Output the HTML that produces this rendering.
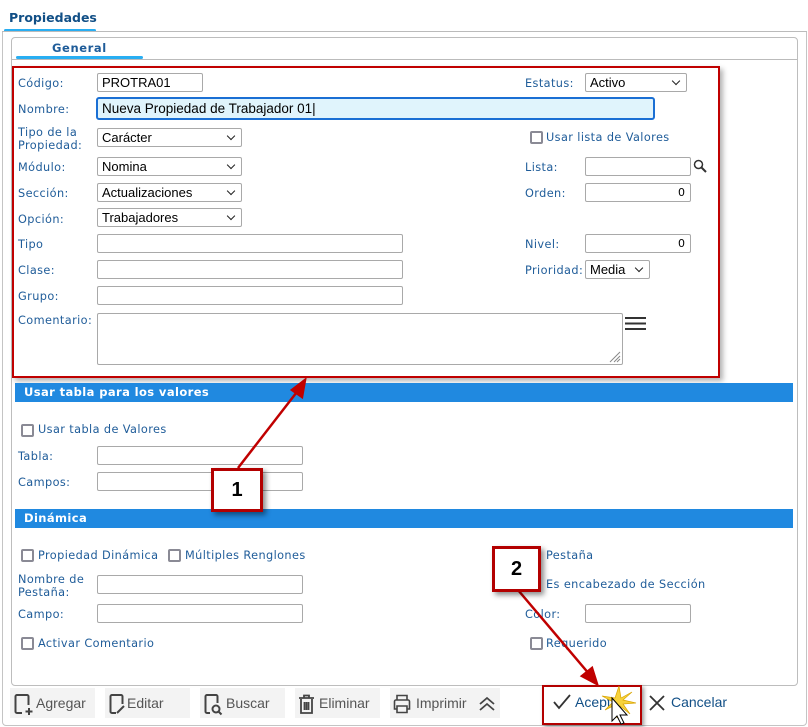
<!DOCTYPE html>
<html><head><meta charset="utf-8"><style>
*{box-sizing:border-box}
body{margin:0;width:808px;height:727px;background:#fff;position:relative;overflow:hidden;font-family:"DejaVu Sans","Liberation Sans",sans-serif;}
.a{position:absolute}
.l{position:absolute;font-size:11.3px;color:#1f5c99;letter-spacing:.4px;line-height:13px}
.i{position:absolute;border:1px solid #a9a9a9;border-radius:2px;background:#fff;height:19px;font-family:"Liberation Sans",sans-serif;font-size:13px;padding:1px 4px;color:#000;line-height:16px}
.s::after{content:"";position:absolute;right:7px;top:4px;width:5px;height:5px;border-right:1.5px solid #222;border-bottom:1.5px solid #222;transform:rotate(45deg)}
.r{text-align:right;font-size:11px;font-family:"DejaVu Sans",sans-serif;padding-right:5px}
.cb{position:absolute;width:13px;height:13px;border:2px solid #8a8a95;border-radius:2px;background:#fff}
.bar{position:absolute;left:15px;width:778px;height:19px;background:#2089e0;color:#fff;font-weight:bold;font-size:11.5px;padding:2px 9px;letter-spacing:.4px}
.btn{position:absolute;top:688px;height:30px;background:#f3f3f3;font-family:"Liberation Sans",sans-serif;font-size:14px;color:#555;line-height:30px}
.call{position:absolute;border:3px solid #b30000;background:#fff;box-shadow:3px 3px 5px rgba(0,0,0,.45);font:bold 20px "Liberation Sans",sans-serif;text-align:center}
</style></head><body>
<div class="a" style="left:2px;top:4px;width:805px;height:722px;border:1px solid #c4c4c4;border-radius:4px"></div>
<div class="a" style="left:0;top:4px;width:808px;height:27px;background:#fff"></div>
<div class="a" style="left:9px;top:10px;font:bold 12.5px 'DejaVu Sans',sans-serif;color:#114f86">Propiedades</div>
<div class="a" style="left:4px;top:29px;width:92px;height:3px;background:#29aef2;border-radius:2px"></div>
<div class="a" style="left:2px;top:31px;width:805px;height:1px;background:#bbb"></div>
<div class="a" style="left:11px;top:37px;width:787px;height:649px;border:1px solid #bdbdbd;border-radius:4px"></div>
<div class="a" style="left:52px;top:41px;font:bold 11.5px 'DejaVu Sans',sans-serif;color:#1f5c99;letter-spacing:.6px">General</div>
<div class="a" style="left:16px;top:56px;width:127px;height:3px;background:#29aef2;border-radius:2px"></div>
<div class="a" style="left:12px;top:59px;width:785px;height:1px;background:#bbb"></div>

<div class="a" style="left:12px;top:66px;width:708px;height:312px;border:2px solid #c00000;box-shadow:3px 3px 5px rgba(0,0,0,.3)"></div>

<div class="l" style="left:18px;top:77px">Código:</div><div class="i" style="left:97px;top:73px;width:106px">PROTRA01</div>
<div class="l" style="left:18px;top:103px">Nombre:</div><div class="i" style="left:96px;top:97px;width:559px;height:23px;border:2px solid #1a6fd4;background:#e0f4fc;border-radius:3px;padding-top:2px;font-size:13.5px">Nueva Propiedad de Trabajador 01|</div>
<div class="l" style="left:18px;top:126px">Tipo de la<br>Propiedad:</div><div class="i s" style="left:97px;top:128px;width:145px">Carácter</div>
<div class="l" style="left:18px;top:161px">Módulo:</div><div class="i s" style="left:97px;top:157px;width:145px">Nomina</div>
<div class="l" style="left:18px;top:187px">Sección:</div><div class="i s" style="left:97px;top:183px;width:145px">Actualizaciones</div>
<div class="l" style="left:18px;top:213px">Opción:</div><div class="i s" style="left:97px;top:208px;width:145px">Trabajadores</div>
<div class="l" style="left:18px;top:238px">Tipo</div><div class="i" style="left:97px;top:234px;width:306px"></div>
<div class="l" style="left:18px;top:264px">Clase:</div><div class="i" style="left:97px;top:260px;width:306px"></div>
<div class="l" style="left:18px;top:290px">Grupo:</div><div class="i" style="left:97px;top:286px;width:306px"></div>
<div class="l" style="left:18px;top:314px">Comentario:</div><div class="i" style="left:97px;top:313px;width:526px;height:52px"></div>
<svg class="a" style="left:606px;top:348px" width="16" height="16"><path d="M14 4L4 14M14 8L8 14M14 11L11 14" stroke="#888" stroke-width="1"/></svg>
<svg class="a" style="left:625px;top:316px" width="22" height="16"><path d="M0 2H21M0 7.5H21M0 13H21" stroke="#333" stroke-width="2"/></svg>

<div class="l" style="left:525px;top:77px">Estatus:</div><div class="i s" style="left:585px;top:73px;width:102px;height:19px">Activo</div>
<div class="cb" style="left:530px;top:131px"></div><div class="l" style="left:546px;top:131px">Usar lista de Valores</div>
<div class="l" style="left:525px;top:161px">Lista:</div><div class="i" style="left:585px;top:157px;width:106px"></div>
<svg class="a" style="left:693px;top:159px" width="14" height="14"><circle cx="5.5" cy="5.5" r="4" fill="none" stroke="#333" stroke-width="1.5"/><path d="M8.5 8.5L13 13" stroke="#333" stroke-width="2"/></svg>
<div class="l" style="left:525px;top:187px">Orden:</div><div class="i r" style="left:585px;top:183px;width:106px">0</div>
<div class="l" style="left:525px;top:238px">Nivel:</div><div class="i r" style="left:585px;top:234px;width:106px">0</div>
<div class="l" style="left:525px;top:264px">Prioridad:</div><div class="i s" style="left:585px;top:260px;width:65px;height:19px">Media</div>

<div class="bar" style="top:383px">Usar tabla para los valores</div>
<div class="cb" style="left:21px;top:424px"></div><div class="l" style="left:38px;top:423px">Usar tabla de Valores</div>
<div class="l" style="left:18px;top:450px">Tabla:</div><div class="i" style="left:97px;top:446px;width:206px"></div>
<div class="l" style="left:18px;top:476px">Campos:</div><div class="i" style="left:97px;top:472px;width:206px"></div>

<div class="bar" style="top:509px">Dinámica</div>
<div class="cb" style="left:21px;top:549px"></div><div class="l" style="left:38px;top:549px">Propiedad Dinámica</div>
<div class="cb" style="left:168px;top:549px"></div><div class="l" style="left:185px;top:549px">Múltiples Renglones</div>
<div class="l" style="left:546px;top:549px">Pestaña</div>
<div class="l" style="left:18px;top:573px">Nombre de<br>Pestaña:</div><div class="i" style="left:97px;top:575px;width:206px"></div>
<div class="l" style="left:546px;top:578px">Es encabezado de Sección</div>
<div class="l" style="left:18px;top:608px">Campo:</div><div class="i" style="left:97px;top:604px;width:206px"></div>
<div class="l" style="left:525px;top:608px">Color:</div><div class="i" style="left:585px;top:604px;width:106px"></div>
<div class="cb" style="left:21px;top:637px"></div><div class="l" style="left:38px;top:637px">Activar Comentario</div>
<div class="cb" style="left:530px;top:637px"></div><div class="l" style="left:546px;top:637px">Requerido</div>

<div class="btn" style="left:10px;width:85px"><svg class="a" style="left:3px;top:6px" width="22" height="22"><path d="M9 19H4a1.5 1.5 0 0 1-1.5-1.5V2.5A1.5 1.5 0 0 1 4 1h10a1.5 1.5 0 0 1 1.5 1.5V11M16 14v7M12.5 17.5h7" fill="none" stroke="#444" stroke-width="2"/></svg><span class="a" style="left:26px">Agregar</span></div>
<div class="btn" style="left:105px;width:85px"><svg class="a" style="left:3px;top:6px" width="20" height="22"><path d="M8 19H4a1.5 1.5 0 0 1-1.5-1.5V2.5A1.5 1.5 0 0 1 4 1h9a1.5 1.5 0 0 1 1.5 1.5V10M9 19l7-7" fill="none" stroke="#444" stroke-width="2"/></svg><span class="a" style="left:22px">Editar</span></div>
<div class="btn" style="left:200px;width:85px"><svg class="a" style="left:3px;top:6px" width="22" height="22"><path d="M7 19H4a1.5 1.5 0 0 1-1.5-1.5V2.5A1.5 1.5 0 0 1 4 1h9a1.5 1.5 0 0 1 1.5 1.5V9" fill="none" stroke="#444" stroke-width="2"/><circle cx="13" cy="15" r="3.5" fill="none" stroke="#444" stroke-width="2"/><path d="M15.5 17.5l3 3" stroke="#444" stroke-width="2"/></svg><span class="a" style="left:26px">Buscar</span></div>
<div class="btn" style="left:295px;width:85px"><svg class="a" style="left:3px;top:6px" width="18" height="22"><path d="M1 4H16M6 4V1.5h5V4M3 5v14h11V5M6.5 8v8M8.5 8v8M10.5 8v8" fill="none" stroke="#444" stroke-width="1.8"/></svg><span class="a" style="left:24px">Eliminar</span></div>
<div class="btn" style="left:390px;width:84px"><svg class="a" style="left:2px;top:6px" width="20" height="22"><path d="M5 6V1.5h10V6M5 15H2.5V7.5A1.5 1.5 0 0 1 4 6h12a1.5 1.5 0 0 1 1.5 1.5V15H15M5 12h10v6.5H5z" fill="none" stroke="#444" stroke-width="1.6"/></svg><span class="a" style="left:26px">Imprimir</span></div>
<div class="btn" style="left:474px;width:26px"><svg class="a" style="left:4px;top:8px" width="18" height="16"><path d="M2 8l7-6 7 6M2 14l7-6 7 6" fill="none" stroke="#444" stroke-width="1.8"/></svg></div>

<svg class="a" style="left:553px;top:694px" width="18" height="16"><path d="M1 8l5 6L17 1" fill="none" stroke="#333" stroke-width="1.8"/></svg>
<div class="a" style="left:575px;top:694px;font:14px 'Liberation Sans',sans-serif;color:#114f86">Aceptar</div>
<svg class="a" style="left:649px;top:695px" width="16" height="16"><path d="M1 1L15 15M15 1L1 15" stroke="#333" stroke-width="1.8"/></svg>
<div class="a" style="left:671px;top:694px;font:14px 'Liberation Sans',sans-serif;color:#114f86">Cancelar</div>
<div class="a" style="left:542px;top:685px;width:100px;height:40px;border:2px solid #b30000;box-shadow:2px 2px 4px rgba(0,0,0,.4)"></div>
<svg class="a" style="left:600px;top:684px" width="40" height="42"><path d="M19 2L21 14L32 8L23 16L36 19L23 20L30 30L20 22L17 34L15 21L5 26L13 18L2 12L15 14z" fill="#f7d23a" stroke="#d9a400" stroke-width=".7"/><path d="M12 14v23l5-5 4 8 3-1-4-8h7z" fill="#fff" stroke="#000" stroke-width="1"/></svg>

<svg class="a" style="left:0;top:0" width="808" height="727"><g stroke="#c00000" stroke-width="2.5" fill="#c00000"><line x1="238" y1="468" x2="300" y2="388"/><path d="M305 380L302 397L292 390z"/><line x1="518" y1="590" x2="590" y2="675"/><path d="M597 684L582 676L592 668z"/></g></svg>
<div class="call" style="left:211px;top:468px;width:52px;height:44px;line-height:38px">1</div>
<div class="call" style="left:492px;top:546px;width:49px;height:46px;line-height:40px">2</div>
</body></html>
